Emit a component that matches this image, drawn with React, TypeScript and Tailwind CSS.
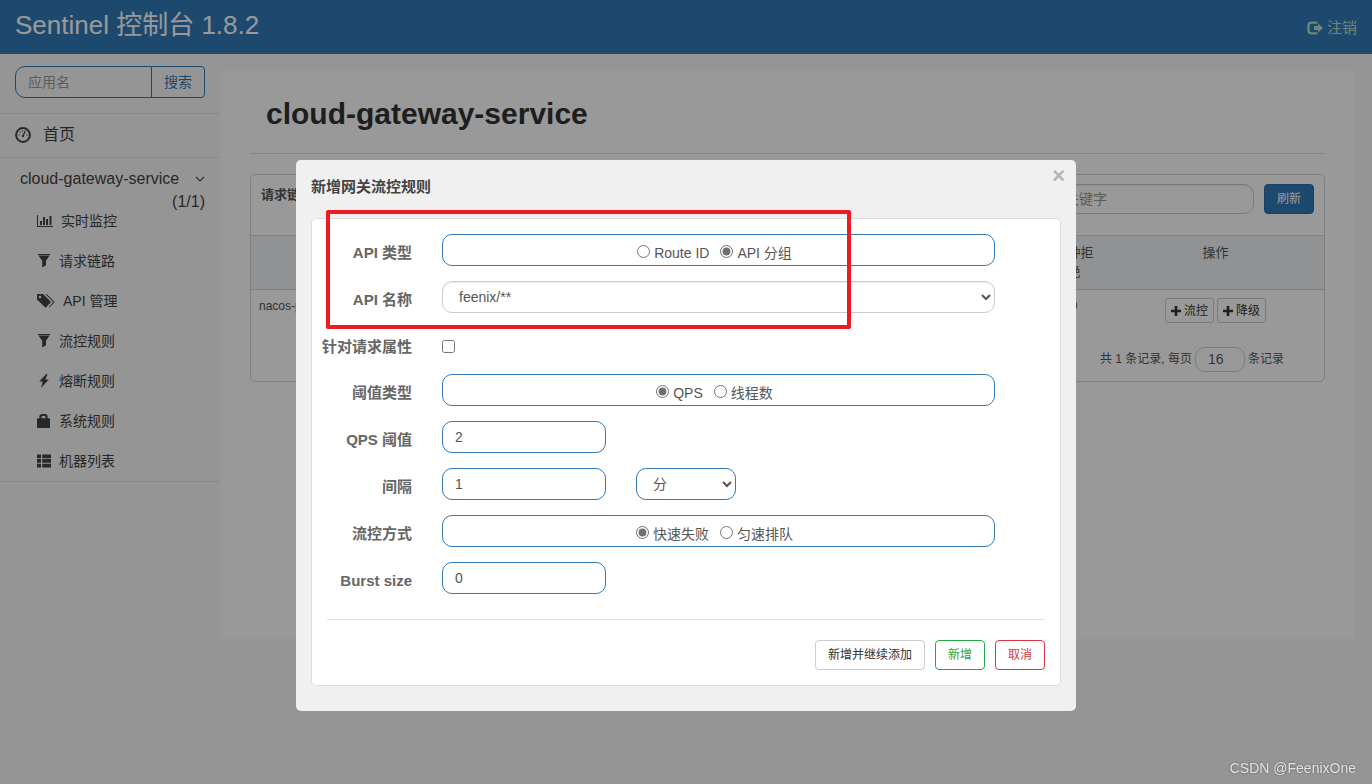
import React, { useState } from 'react';
import { clsx } from 'clsx';

// ─── Icons ────────────────────────────────────────────────────
interface IconProps {
  className?: string;
}

const DashboardIcon = ({ className }: IconProps) => (
  <svg viewBox="0 0 16 16" className={className} fill="none" aria-hidden="true">
    <circle cx="8" cy="8" r="6.9" stroke="currentColor" strokeWidth="2" />
    <path d="M8.2 8.8 10 4.2" stroke="currentColor" strokeWidth="1.3" strokeLinecap="round" />
    <circle cx="8" cy="9" r="1.2" fill="currentColor" />
    <path
      d="M3.4 8h1.3M4.8 4.9l.8.8M7.4 3.6v1.1M11.4 8h1.3"
      stroke="currentColor"
      strokeWidth="1.1"
    />
  </svg>
);

const StatsIcon = ({ className }: IconProps) => (
  <svg viewBox="0 0 16 14" className={className} fill="currentColor" aria-hidden="true">
    <path d="M0 1h1v11h15v1H0zM3 7h2v4H3zM6 3h2v8H6zM9 5h2v6H9zM12.5 2h2v9h-2z" />
  </svg>
);

const FilterIcon = ({ className }: IconProps) => (
  <svg viewBox="0 0 14 14" className={className} fill="currentColor" aria-hidden="true">
    <path d="M1 0h12v1.2H1zM1.6 1.7h10.8L9 6.8v4.4L5.2 13.6V6.8z" />
  </svg>
);

const TagsIcon = ({ className }: IconProps) => (
  <svg viewBox="0 0 18 14" className={className} fill="currentColor" aria-hidden="true">
    <path
      fillRule="evenodd"
      d="M0 .6Q0 0 .6 0H6l7.6 7.4q.5.6 0 1.2L9.2 13.3q-.6.5-1.2 0L0 5.6zM3 1.7a1.3 1.3 0 1 0 0 2.6 1.3 1.3 0 0 0 0-2.6z"
    />
    <path d="M8.4 0h1.2l7.6 7.4q.5.6 0 1.2l-4.6 4.9-.6-.6L16.200 8z" />
  </svg>
);

const FlashIcon = ({ className }: IconProps) => (
  <svg viewBox="0 0 14 14" className={className} fill="currentColor" aria-hidden="true">
    <path d="M9.4 0 2.200 7.600h3.500L4 14l7.800-8.600H8.200L10.600 0z" />
  </svg>
);

const LockIcon = ({ className }: IconProps) => (
  <svg viewBox="0 0 14 14" className={className} fill="currentColor" aria-hidden="true">
    <path
      fillRule="evenodd"
      d="M2.4 4.2V2.8Q2.4 0 5 0h3Q10.6 0 10.6 2.8V4.2h1.6q.8 0 .8.8v8.2q0 .8-.8.8H.8q-.8 0-.8-.8V5q0-.8.8-.8zM4.6 4.2h3.8V3q0-.9-.9-.9h-2q-.9 0-.9.9z"
    />
  </svg>
);

const ListIcon = ({ className }: IconProps) => (
  <svg viewBox="0 0 14 14" className={className} fill="currentColor" aria-hidden="true">
    <path d="M0 .5h4v3.7H0zM0 5h4v3.7H0zM0 9.7h4v3.8H0zM5.2.5H14v3.7H5.200zM5.200 5H14v3.7H5.200zM5.200 9.7H14v3.8H5.200z" />
  </svg>
);

const LogoutIcon = ({ className }: IconProps) => (
  <svg viewBox="0 0 16 14" className={className} aria-hidden="true">
    <path
      d="M10.5 1.6h-6Q1.5 1.6 1.5 4.5v5q0 2.9 3 2.9h6"
      fill="none"
      stroke="currentColor"
      strokeWidth="2.4"
    />
    <path d="M7 5h4V2.2L16 7l-5 4.8V9H7z" fill="currentColor" />
  </svg>
);

const PlusIcon = ({ className }: IconProps) => (
  <svg viewBox="0 0 10 10" className={className} fill="currentColor" aria-hidden="true">
    <path d="M3.7 0h2.6v3.7H10v2.6H6.3V10H3.7V6.3H0V3.7h3.7z" />
  </svg>
);

const ChevronIcon = ({ className }: IconProps) => (
  <svg viewBox="0 0 10 6" className={className} fill="none" aria-hidden="true">
    <path d="m1 .8 4 4 4-4" stroke="currentColor" strokeWidth="1.2" />
  </svg>
);

// ─── Config ───────────────────────────────────────────────────
const MENU_ITEMS = [
  { icon: StatsIcon,  size: 'w-4',       label: '实时监控' },
  { icon: FilterIcon, size: 'w-3.5',     label: '请求链路' },
  { icon: TagsIcon,   size: 'w-[18px]',  label: 'API 管理' },
  { icon: FilterIcon, size: 'w-3.5',     label: '流控规则' },
  { icon: FlashIcon,  size: 'w-3.5',     label: '熔断规则' },
  { icon: LockIcon,   size: 'w-3.5',     label: '系统规则' },
  { icon: ListIcon,   size: 'w-3.5',     label: '机器列表' },
];

const FIELD = 'h-8 rounded-[10px] border border-[#337ab7] bg-white text-sm text-[#555]';

// ─── Header ───────────────────────────────────────────────────
const Header = () => (
  <header className="flex h-[54px] items-center justify-between bg-[#337ab7] px-[15px]">
    <a href="#/" className="pb-1 text-[26px] leading-8 text-white">
      Sentinel 控制台 1.8.2
    </a>
    <a href="#/logout" className="flex items-center gap-1 pt-0.5 text-[15px] text-[#b5dfc8]">
      <LogoutIcon className="h-3.5 w-4" />
      注销
    </a>
  </header>
);

// ─── Sidebar ──────────────────────────────────────────────────
const Sidebar = () => (
  <aside className="w-[220px] shrink-0 text-[#444]">
    <form className="flex border-b border-[#e7e7e7] px-[15px] pt-3 pb-[15px]">
      <input
        aria-label="应用名"
        placeholder="应用名"
        className="h-8 w-0 flex-1 rounded-l-[10px] border border-[#337ab7] px-3 text-sm placeholder:text-[#999]"
      />
      <button
        type="button"
        className="-ml-px h-8 w-[54px] rounded-r border border-[#337ab7] text-sm text-[#337ab7]"
      >
        搜索
      </button>
    </form>

    <a href="#/home" className="flex h-11 items-center gap-3 border-b border-[#e7e7e7] px-[15px] pb-0.5">
      <DashboardIcon className="size-4" />
      首页
    </a>

    <div className="border-b border-[#e7e7e7] pt-[9px]">
      <a href="#/app" className="block pr-[15px] pl-5 leading-[23px]">
        <span className="flex items-center justify-between">
          cloud-gateway-service
          <ChevronIcon className="h-1.5 w-2.5" />
        </span>
        <span className="block text-right">(1/1)</span>
      </a>
      <nav className="-mt-3">
        {MENU_ITEMS.map(({ icon: Icon, size, label }) => (
          <a key={label} href="#/rule" className="flex h-10 items-center gap-2 pl-[37px] text-sm">
            <Icon className={clsx('h-3.5 shrink-0', size)} />
            {label}
          </a>
        ))}
      </nav>
    </div>
  </aside>
);

// ─── Main content ─────────────────────────────────────────────
const RowButton = ({ label }: { label: string }) => (
  <button
    type="button"
    className="inline-flex h-[25px] items-center gap-[3px] rounded-[3px] border border-[#ccc] px-[5px] text-xs text-[#333]"
  >
    <PlusIcon className="size-2.5" />
    {label}
  </button>
);

const Content = () => (
  <main className="mt-[17px] mr-[17px] min-h-[568px] min-w-0 flex-1 bg-white px-[30px]">
    <h1 className="border-b border-[#ddd] px-4 pt-[25px] pb-[21px] text-3xl font-bold text-[#333]">
      cloud-gateway-service
    </h1>

    <section className="mt-5 rounded-[5px] border border-[#d5d5d5] text-[#555]">
      <div className="flex h-[60px] items-start gap-2.5 px-2.5 pt-[9px]">
        <strong className="mr-auto pt-0.5 text-[13px] leading-[18px]">请求链路</strong>
        <input
          aria-label="关键字"
          placeholder="关键字"
          className="h-[30px] w-[202px] rounded-[10px] border border-[#ccc] px-3 text-sm shadow-[inset_0_1px_1px_rgba(0,0,0,0.075)] placeholder:text-[#999]"
        />
        <button
          type="button"
          className="h-[30px] w-[50px] rounded border border-[#2e6da4] bg-[#337ab7] text-xs text-white"
        >
          刷新
        </button>
      </div>

      <table className="w-full table-fixed text-[13px]">
        <thead className="border-y border-[#d5d5d5] bg-[#f0f3f6]">
          <tr className="h-[54px] align-top leading-[19px]">
            <th aria-label="资源名" />
            <th className="w-[66px] px-3 pt-[7px] font-normal">分钟拒绝</th>
            <th className="w-[217px] pt-[7px] font-normal">操作</th>
          </tr>
        </thead>
        <tbody>
          <tr className="h-12 text-xs">
            <td className="px-2 pb-4">nacos-provider</td>
            <td className="pb-4 text-center">0</td>
            <td className="pb-1.5 pl-[58px] align-middle">
              <div className="flex gap-[3px]">
                <RowButton label="流控" />
                <RowButton label="降级" />
              </div>
            </td>
          </tr>
        </tbody>
      </table>

      <label className="flex items-center justify-end gap-[3px] py-[9px] pr-10 text-xs">
        共 1 条记录, 每页
        <input
          defaultValue="16"
          className="h-[25px] w-[50px] rounded-[10px] border border-[#ccc] px-3 text-sm"
        />
        条记录
      </label>
    </section>
  </main>
);

// ─── Rule form ────────────────────────────────────────────────
interface FormRowProps {
  label: string;
  htmlFor?: string;
  children: React.ReactNode;
}

const FormRow = ({ label, htmlFor, children }: FormRowProps) => (
  <div className="flex gap-[30px]">
    <label
      htmlFor={htmlFor}
      className="w-[93px] shrink-0 pt-[7px] pb-px text-right text-[15px] leading-[23px] font-bold whitespace-nowrap text-[#666]"
    >
      {label}
    </label>
    {children}
  </div>
);

interface RadioFieldProps {
  name: string;
  label: string;
  options: string[];
  initial: string;
}

const RadioField = ({ name, label, options, initial }: RadioFieldProps) => {
  const [value, setValue] = useState(initial);

  return (
    <div
      role="radiogroup"
      aria-label={label}
      className={clsx(FIELD, 'flex flex-1 items-center justify-center gap-[11px] pt-[5px] pr-2')}
    >
      {options.map((option) => (
        <label key={option} className="flex items-center gap-1">
          <input
            type="radio"
            name={name}
            checked={value === option}
            onChange={() => setValue(option)}
            className="mb-0.5 size-[13px] accent-[#6f6f6f]"
          />
          {option}
        </label>
      ))}
    </div>
  );
};

const ActionButton = ({ label, className }: { label: string; className: string }) => (
  <button type="button" className={clsx('h-[30px] rounded border bg-white px-3 text-xs', className)}>
    {label}
  </button>
);

const RuleDialog = () => (
  <div className="fixed inset-0 overflow-auto bg-black/40">
    <div
      role="dialog"
      aria-label="新增网关流控规则"
      className="relative mx-auto mt-40 max-w-[780px] rounded-[5px] bg-[#f0f0f0] px-[15px] pb-[25px]"
    >
      <div className="flex h-[58px] items-start justify-between">
        <h2 className="pt-4 text-[15px] font-bold text-[#444]">新增网关流控规则</h2>
        <button type="button" aria-label="Close" className="-mr-1 pt-1 text-[22px] leading-6 font-bold text-[#b5b5b5]">
          ×
        </button>
      </div>

      <form className="rounded-[5px] border border-[#ddd] bg-white p-[15px]">
        <div className="-ml-2 flex flex-col gap-[15px] pr-[50px]">
          <FormRow label="API 类型">
            <RadioField name="resourceMode" label="API 类型" options={['Route ID', 'API 分组']} initial="API 分组" />
          </FormRow>
          <FormRow label="API 名称" htmlFor="api-name">
            <select
              id="api-name"
              className="h-8 flex-1 rounded-[10px] border border-[#ccc] bg-white px-3 text-sm text-[#555] shadow-[inset_0_1px_1px_rgba(0,0,0,0.075)]"
            >
              <option>feenix/**</option>
            </select>
          </FormRow>
          <FormRow label="针对请求属性" htmlFor="param-item">
            <input id="param-item" type="checkbox" className="mt-3 size-[13px]" />
          </FormRow>
          <FormRow label="阈值类型">
            <RadioField name="grade" label="阈值类型" options={['QPS', '线程数']} initial="QPS" />
          </FormRow>
          <FormRow label="QPS 阈值" htmlFor="count">
            <input id="count" defaultValue="2" className={clsx(FIELD, 'w-[164px] px-3')} />
          </FormRow>
          <FormRow label="间隔" htmlFor="interval">
            <input id="interval" defaultValue="1" className={clsx(FIELD, 'w-[164px] px-3')} />
            <select aria-label="间隔单位" className={clsx(FIELD, 'w-[100px] px-3')}>
              <option>分</option>
            </select>
          </FormRow>
          <FormRow label="流控方式">
            <RadioField name="behavior" label="流控方式" options={['快速失败', '匀速排队']} initial="快速失败" />
          </FormRow>
          <FormRow label="Burst size" htmlFor="burst">
            <input id="burst" defaultValue="0" className={clsx(FIELD, 'w-[164px] px-3')} />
          </FormRow>
        </div>

        <div className="mt-[25px] flex justify-end gap-2.5 border-t border-[#e0e0e0] pt-5">
          <ActionButton label="新增并继续添加" className="border-[#ccc] text-[#333]" />
          <ActionButton label="新增" className="border-[#28a745] text-[#28a745]" />
          <ActionButton label="取消" className="border-[#dc3545] text-[#dc3545]" />
        </div>
      </form>

      {/* Highlight around the API fields */}
      <div className="pointer-events-none absolute top-[50px] left-[30px] h-[119px] w-[525px] rounded-[2px] border-4 border-[#ed1c24]" />
    </div>
  </div>
);

export default function App() {
  return (
    <div className="min-h-screen bg-[#f8f8f8] font-['Liberation_Sans','Noto_Sans_CJK_SC',sans-serif]">
      <Header />
      <div className="flex">
        <Sidebar />
        <Content />
      </div>
      <RuleDialog />
      <p className="fixed right-4 bottom-1.5 text-sm leading-5 text-[#e4e4e4] [text-shadow:0_0_2px_#555]">
        CSDN @FeenixOne
      </p>
    </div>
  );
}
